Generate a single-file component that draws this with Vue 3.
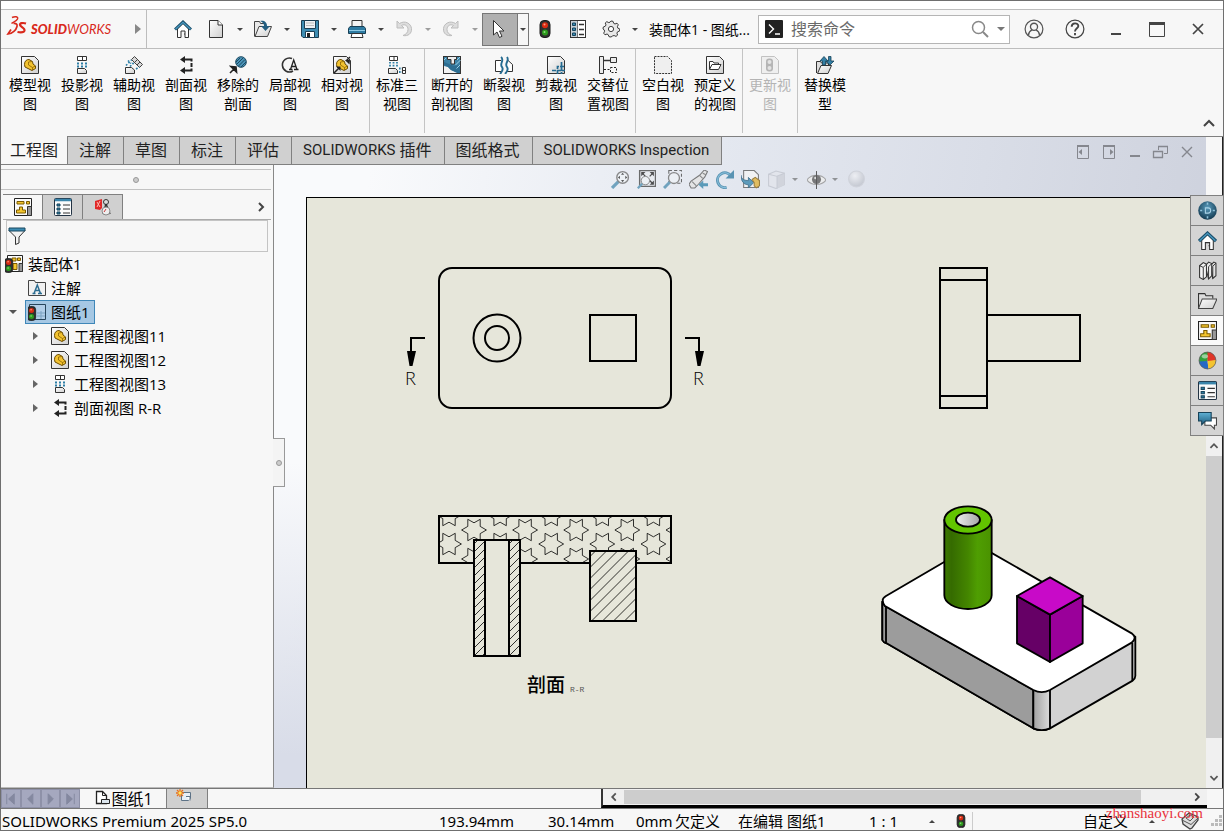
<script setup>
import { h } from 'vue'

const Icon = (p) =>
  h('svg', { width: p.size || 18, height: p.size || 18, viewBox: '0 0 18 18', 'aria-hidden': 'true' }, [
    h('use', { href: '#' + p.name }),
  ])
Icon.props = ['name', 'size']

const fileTools = [
  { icon: 'doc', label: '新建' },
  { icon: 'open', label: '打开' },
  { icon: 'save', label: '保存' },
  { icon: 'print', label: '打印' },
  { icon: 'undo', label: '撤消', off: true },
  { icon: 'redo', label: '重做', off: true },
]

const ribbon = [
  [
    { icon: 'model', a: '模型视', b: '图' },
    { icon: 'proj', a: '投影视', b: '图' },
    { icon: 'aux', a: '辅助视', b: '图' },
    { icon: 'section', a: '剖面视', b: '图' },
    { icon: 'removed', a: '移除的', b: '剖面' },
    { icon: 'detail', a: '局部视', b: '图' },
    { icon: 'relative', a: '相对视', b: '图' },
  ],
  [{ icon: 'std3', a: '标准三', b: '视图' }],
  [
    { icon: 'broken', a: '断开的', b: '剖视图' },
    { icon: 'break', a: '断裂视', b: '图' },
    { icon: 'crop', a: '剪裁视', b: '图' },
    { icon: 'alt', a: '交替位', b: '置视图' },
  ],
  [
    { icon: 'empty', a: '空白视', b: '图' },
    { icon: 'predef', a: '预定义', b: '的视图' },
  ],
  [{ icon: 'update', a: '更新视', b: '图', off: true }],
  [{ icon: 'replace', a: '替换模', b: '型' }],
]

const tabs = [
  { zh: '工程图' },
  { zh: '注解' },
  { zh: '草图' },
  { zh: '标注' },
  { zh: '评估' },
  { en: 'SOLIDWORKS', zh: '插件' },
  { zh: '图纸格式' },
  { en: 'SOLIDWORKS Inspection' },
]
const sideTabs = ['sheet', 'list', 'dim']
const tree = [
  { level: 0, icon: 'root', text: '装配体1' },
  { level: 1, icon: 'note', text: '注解' },
  { level: 1, icon: 'page', text: '图纸1', open: true, selected: true },
  { level: 2, icon: 'model', text: '工程图视图11', closed: true },
  { level: 2, icon: 'model', text: '工程图视图12', closed: true },
  { level: 2, icon: 'proj', text: '工程图视图13', closed: true },
  { level: 2, icon: 'section', text: '剖面视图 R-R', closed: true },
]
const viewTools = [
  { icon: 'zoomfit' }, { icon: 'zoomarea' }, { icon: 'zoomsel' }, { icon: 'prevview' }, { icon: 'rotate' },
  { icon: 'view3d' }, { icon: 'cube', drop: true }, { icon: 'eye', drop: true }, { icon: 'sphere' },
]
const mdi = ['paneL', 'paneR', 'mdimin', 'mdirest', 'mdiclose']
const taskTabs = ['globe', 'home', 'books', 'folder', 'sheet', 'ball', 'list', 'chat']

const starPath = (cx, cy) => {
  const pts = []
  for (let i = 0; i < 12; i++) {
    const r = i % 2 ? 7.2 : 12.4
    const t = (i * Math.PI) / 6
    pts.push(`${(cx + r * Math.cos(t)).toFixed(1)} ${(cy + r * Math.sin(t)).toFixed(1)}`)
  }
  return 'M' + pts.join('L') + 'Z'
}
let stars = ''
for (let k = 0; k < 5; k++) {
  stars += starPath(449 + k * 51.1, 515) + starPath(449 + k * 51.1, 544)
  stars += starPath(474 + k * 51.1, 530) + starPath(474 + k * 51.1, 559)
}
const hatch = (x1, x2, y1, y2, step) => {
  let d = ''
  const w = x2 - x1
  for (let y = y1 + step / 2; y < y2 + w; y += step) d += `M${x1} ${y}L${x2} ${y - w}`
  return d
}
const hatchLeft = hatch(474, 485, 540, 656, 8)
const hatchRight = hatch(509, 520, 540, 656, 8)
const hatchBlock = hatch(590, 636, 551, 621, 11)
</script>

<template>
  <div class="app">
    <svg class="sprite" aria-hidden="true">
      <defs>
        <linearGradient id="gBlue" x1="0" y1="0" x2="0" y2="1"><stop offset="0" stop-color="#5fb0d4" /><stop offset="1" stop-color="#1d5c7e" /></linearGradient>
        <linearGradient id="gGray" x1="0" y1="0" x2="1" y2="1"><stop offset="0" stop-color="#fff" /><stop offset="1" stop-color="#cfcfcf" /></linearGradient>
        <linearGradient id="gTube" x1="0" y1="0" x2="1" y2="0"><stop offset="0" stop-color="#3d7a00" /><stop offset=".15" stop-color="#356b00" /><stop offset=".5" stop-color="#448600" /><stop offset=".7" stop-color="#4f9e02" /><stop offset="1" stop-color="#4a9200" /></linearGradient>
        <linearGradient id="gHole" x1="0" y1="0" x2="1" y2="0"><stop offset="0" stop-color="#efefef" /><stop offset="1" stop-color="#a5a5a5" /></linearGradient>
        <linearGradient id="gCorner" x1="0" y1="0" x2="1" y2="0"><stop offset="0" stop-color="#a2a2a2" /><stop offset="1" stop-color="#dcdcdc" /></linearGradient>
        <radialGradient id="gGlobe" cx=".5" cy=".35" r=".65"><stop offset="0" stop-color="#5a9cbd" /><stop offset="1" stop-color="#12384f" /></radialGradient>
        <radialGradient id="gPale" cx=".4" cy=".3" r=".7"><stop offset="0" stop-color="#f0f1f5" /><stop offset="1" stop-color="#c0c4cd" /></radialGradient>
        <clipPath id="cPlate"><rect x="439" y="516" width="232" height="47" /></clipPath>
        <clipPath id="cTube"><rect x="474" y="540" width="46" height="116" /></clipPath>
        <clipPath id="cBlock"><rect x="590" y="551" width="46" height="70" /></clipPath>
        <clipPath id="cBall"><circle cx="9" cy="9" r="8" /></clipPath>
      </defs>
      <symbol id="home" viewBox="0 0 18 18"><path d="M3.500 9v8.500H7V11h4v6.500h3.500V9L9 3.500z" fill="#fff" stroke="#333" /><path d="M10 14h1" stroke="#333" /><path d="M1 9.500 9 2l8 7.500" fill="none" stroke="#1b4f6c" stroke-width="3" /><path d="M1.500 9.200 9 2.200l7.500 7" fill="none" stroke="#4a9ac0" stroke-width="1.200" /></symbol>
      <symbol id="doc" viewBox="0 0 18 18"><path d="M2.500.5h8.500L15.500 5v12.500h-13z" fill="url(#gGray)" stroke="#333" /><path d="M11 .5V5h4.500" fill="#fff" stroke="#333" /></symbol>
      <symbol id="open" viewBox="0 0 18 18"><path d="M.5 16.500v-15h5l1 2h4" fill="#e8e8e8" stroke="#444" /><path d="M1 16.500 5 6.500h12.500l-4 10z" fill="url(#gGray)" stroke="#444" /><path d="M6 1c4-1 7 1 7 5h3l-4.500 5L7 6h3c0-2-1-4-4-5z" fill="#235e80" /></symbol>
      <symbol id="save" viewBox="0 0 18 18"><path d="M.5.5h17v17H2l-1.500-1.500z" fill="#3d8db3" stroke="#1b3e52" /><path d="M3.500.5h11v8h-11z" fill="#eef2f4" stroke="#1b3e52" /><path d="M5 3h8M5 5.500h8" stroke="#bbb" /><path d="M4.500 11.500h9v6h-9z" fill="#fff" stroke="#1b3e52" /><path d="M6 13h3v4H6z" fill="#222" /></symbol>
      <symbol id="print" viewBox="0 0 18 18"><path d="M4 7V.5h10V7" fill="#f4f4f4" stroke="#333" /><path d="M2 6.500h14l1.500 2v5H.5v-5z" fill="#2e7ba2" stroke="#173f55" /><path d="M1 10.500h16" stroke="#8fcbe5" /><path d="M4 13.500h10l1 4H3z" fill="#fff" stroke="#333" /></symbol>
      <symbol id="undo" viewBox="0 0 18 18"><path d="M2 1v7h7L6.500 5.500C10 3.500 13 6 13 9.500c0 3-2 5-5 6 5 1 9-2 8.500-7C16 3.500 10 0 4.500 3.500z" fill="#ddd" stroke="#bdbdbd" /></symbol>
      <symbol id="redo" viewBox="0 0 18 18"><path d="M16 1v7H9l2.500-2.500C8 3.500 5 6 5 9.500c0 3 2 5 5 6-5 1-9-2-8.500-7C2 3.500 8 0 13.500 3.500z" fill="#ddd" stroke="#bdbdbd" /></symbol>
      <symbol id="cursor" viewBox="0 0 18 18"><path d="M2.500.5v14.500l3.500-3 2.500 5.500 2.500-1.200-2.500-5.300h4.500z" fill="#fff" stroke="#333" /></symbol>
      <symbol id="light" viewBox="0 0 18 18"><rect x="4" y=".5" width="10" height="17" rx="4" fill="#2f2f2f" stroke="#1d1d1d" /><circle cx="9" cy="5.300" r="3" fill="#d92b12" /><circle cx="8.500" cy="4.500" r="1" fill="#ff9a80" /><circle cx="9" cy="12.500" r="3" fill="#2d9a1d" /><circle cx="8.500" cy="12" r="1" fill="#8fdd7c" /></symbol>
      <symbol id="list" viewBox="0 0 18 18"><rect x=".5" y=".5" width="17" height="17" rx="1" fill="#fbfbfb" stroke="#234" /><path d="M1 2h16" stroke="#3a85ab" stroke-width="2.500" /><path d="M3 6h3v2H3zM3 10h3v2H3zM3 14h3v2H3z" fill="#2f7ca2" stroke="#17445c" /><path d="M9 7h7M9 11h7M9 15h7" stroke="#333" /></symbol>
      <symbol id="options" viewBox="0 0 18 18"><rect x="1.500" y=".5" width="15" height="17" fill="#fff" stroke="#333" /><path d="M2 1h6v16H2z" fill="#c9d2d8" /><path d="M8.500 1v16" stroke="#777" /><path d="M3.500 3h3v2.500h-3zM3.500 8h3v2.500h-3zM3.500 13h3v2.500h-3z" fill="#3a8cb4" stroke="#17445c" /><path d="M10 4.500h5M10 9.500h5M10 14.500h5" stroke="#333" stroke-width="1.300" /></symbol>
      <symbol id="gear" viewBox="0 0 18 18"><path d="M9 1l2 .3.700 2 1.300.7 2-.8 1.300 1.600-.9 1.900.4 1.400 2 .9-.2 2-2 .8-.7 1.300.7 2-1.600 1.300-1.900-.9-1.400.4L9 17l-2-.3-.8-2-1.200-.7-2 .8-1.300-1.600.9-2-.4-1.300L1 9l.3-2 2-.8.7-1.300-.8-1.900L4.800 1.700l2 .9 1.200-.4z" fill="#e8e8e8" stroke="#3a3a3a" /><circle cx="9" cy="9" r="2.600" fill="#fff" stroke="#3a3a3a" /></symbol>
      <symbol id="prompt" viewBox="0 0 18 18"><rect width="18" height="18" rx="1" fill="#222" /><path d="M4 4.500 8.500 9 4 13.500M10 14h5" fill="none" stroke="#fff" stroke-width="1.400" /></symbol>
      <symbol id="search" viewBox="0 0 18 18"><circle cx="7.500" cy="7.500" r="6" fill="none" stroke="#888" stroke-width="1.500" /><path d="M12 12l5 5" stroke="#888" stroke-width="2" /></symbol>
      <symbol id="user" viewBox="0 0 18 18"><circle cx="9" cy="9" r="8" fill="none" stroke="#555" stroke-width="1.100" /><circle cx="9" cy="7" r="3.200" fill="none" stroke="#555" stroke-width="1.200" /><path d="M4 14.500c.3-2.500 1.500-4 3.200-4.700M14 14.500c-.3-2.500-1.500-4-3.200-4.700" fill="none" stroke="#555" stroke-width="1.200" /></symbol>
      <symbol id="help" viewBox="0 0 18 18"><circle cx="9" cy="9" r="8" fill="none" stroke="#444" stroke-width="1.100" /><path d="M6 7c0-4 6-4 6-.7 0 2-3 2.200-3 5M9 12.700v2" fill="none" stroke="#444" stroke-width="1.700" /></symbol>
      <symbol id="wmin" viewBox="0 0 18 18"><path d="M4 14h10" stroke="#444" stroke-width="2" /></symbol>
      <symbol id="wmax" viewBox="0 0 18 18"><path d="M1.500 2v14.500h15V2" fill="none" stroke="#444" /><path d="M1 3.500h16" stroke="#444" stroke-width="3" /></symbol>
      <symbol id="wclose" viewBox="0 0 18 18"><path d="M4 4l10 10M14 4 4 14" stroke="#444" stroke-width="1.700" /></symbol>
      <symbol id="part" viewBox="0 0 18 18"><path d="M3.500 8.500C3.500 5 5.500 3.500 8 3.500l3.500 2L12 8l2.500 2v2.500L11 14.500 4 11z" fill="#f2c230" stroke="#6b4c00" /><path d="M7.500 6v3l4 2.500M11.500 14v-2.500l3-1.500M7.500 6 11 5.500" fill="none" stroke="#8a6300" stroke-width=".8" /></symbol>
      <symbol id="model" viewBox="0 0 18 18"><path d="M.5.5h13l4 4v13H.5z" fill="url(#gGray)" stroke="#333" /><use href="#part" width="18" height="18" /></symbol>
      <symbol id="proj" viewBox="0 0 18 18"><path d="M4.500.5h9v4h-9zM9.500.5v4" fill="#fff" stroke="#333" /><path d="M5 6.500v5M9 6.500v5M13 6.500v5" stroke="#2e7fa6" stroke-width="2" stroke-dasharray="2 1" /><path d="M4.500 12.500h7l2 2v3h-9z" fill="url(#gGray)" stroke="#333" /></symbol>
      <symbol id="aux" viewBox="0 0 18 18"><path d="M6.500 3.500l3-3 8 8-3 3zM9.500 6.500l3-3M12 9l3-3" fill="#d8d8d8" stroke="#444" /><path d="M1 9.500 6.500 4M5 10.500l4-4M11 13l3.500-2M3 4.500l3 3" stroke="#2e7fa6" stroke-width="1.700" stroke-dasharray="1.800 1.600" /><path d="M.5 11.500h6l3 2.500v3.500h-9z" fill="url(#gGray)" stroke="#333" /></symbol>
      <symbol id="section" viewBox="0 0 18 18"><path d="M7 3.500h7.500v2M14.500 7v4M14.500 12.500v2H7" fill="none" stroke="#222" stroke-width="2" /><path d="M8 0v7L3 3.500zM8 11v7l-5-3.500z" fill="#222" /></symbol>
      <symbol id="removed" viewBox="0 0 18 18"><circle cx="12" cy="6" r="5.300" fill="#4a94b9" stroke="#1b4860" /><path d="M8 8l6-6M9.500 10 16 3.500M12 11l5-5M7 6l4-4" stroke="#1b4860" /><path d="M1 17l4-4M2 10.500l5 .5.500 5z" stroke="#222" stroke-width="1.600" fill="#222" /></symbol>
      <symbol id="detail" viewBox="0 0 18 18"><path d="M11 2.500A7 7 0 1 0 12 15" fill="none" stroke="#333" stroke-width="1.600" /><path d="M8 13.500h3.500M13 13.500h4.500M9.500 13.500l3.200-9.500 3.300 9.500M11 10.500h4" fill="none" stroke="#222" stroke-width="1.300" /></symbol>
      <symbol id="relative" viewBox="0 0 18 18"><use href="#model" width="18" height="18" /><path d="M1 17l5-5M17 1l-4 4" stroke="#222" stroke-width="1.500" /><path d="M12 4l4.500 4.500L17 4zM3 10.500h4.500V15z" fill="#222" /></symbol>
      <symbol id="std3" viewBox="0 0 18 18"><path d="M1.500.5h8v4h-8zM6 .5v4" fill="#fff" stroke="#333" /><path d="M2 6v5M5.500 6v5M9 6v5M11 12.500h3M11 16h3" stroke="#2e7fa6" stroke-width="1.800" stroke-dasharray="1.600 1.200" /><path d="M.5 12.500h7l2 2v3h-9z" fill="url(#gGray)" stroke="#333" /><path d="M14.500 11.500h3v6h-3zM14.500 14.500h3" fill="#fff" stroke="#333" /></symbol>
      <symbol id="broken" viewBox="0 0 18 18"><rect x=".5" y=".5" width="17" height="17" fill="#3c82a6" stroke="#333" /><path d="M1 10l4 1 3 3 8 3H1z" fill="#f2f2f2" /><path d="M1 6v3l4 2 3 3 6 3h3V9l-6 1z" fill="#2d6e92" /><path d="M4.500.5h9v3h-2V8H8V3.500H4.500z" fill="#eee" stroke="#333" /><path d="M12.500 9l5-5M13.500 12.500 17 9M14 4l3-3M1 4l2-2" stroke="#9bd0e6" /></symbol>
      <symbol id="break" viewBox="0 0 18 18"><path d="M6 4.500H.5v11H6M12 3.500l5.500 5v7H12" fill="#fff" stroke="#333" /><path d="M6 1c4 3-2 7 1 10 2 3 0 5-2 7M12 1c3 4-3 6 0 10 2 3 0 5-2 7" fill="none" stroke="#256b91" stroke-width="1.900" /></symbol>
      <symbol id="crop" viewBox="0 0 18 18"><path d="M.5.5h13l4 4v13H.5z" fill="url(#gGray)" stroke="#333" /><path d="M5 14.500h13M14.500 6v12M10.500 18v-7.500H18" fill="none" stroke="#256b91" stroke-width="1.700" stroke-dasharray="4 1" /></symbol>
      <symbol id="alt" viewBox="0 0 18 18"><path d="M.5.5h4v17h-4zM11.500 1.500h6v5h-6z" fill="#ececec" stroke="#333" /><path d="M5 4.500h6" stroke="#333" stroke-width="1.500" /><path d="M5 13.500h6M11.500 11.500h6v5h-6z" fill="none" stroke="#222" stroke-dasharray="2 1.500" /></symbol>
      <symbol id="empty" viewBox="0 0 18 18"><path d="M.5.5h13l4 4v13H.5z" fill="#efefef" stroke="#333" stroke-dasharray="2 1" /></symbol>
      <symbol id="predef" viewBox="0 0 18 18"><path d="M.5.5h13l4 4v13H.5z" fill="url(#gGray)" stroke="#333" /><path d="M3.500 13V5.500h3.500l1 1.500h4.500v1.500M3.500 13.500l2.500-5h9l-2.500 5z" fill="#fff" stroke="#333" /></symbol>
      <symbol id="update" viewBox="0 0 18 18"><path d="M.5.5h13l4 4v13H.5z" fill="#efefef" stroke="#c2c2c2" /><rect x="5" y="2.500" width="7" height="13" rx="3" fill="#b5b5b5" /><circle cx="8.500" cy="6" r="2" fill="#e3e3e3" /><circle cx="8.500" cy="12" r="2" fill="#e3e3e3" /></symbol>
      <symbol id="replace" viewBox="0 0 18 18"><path d="M.5 17V5.500h4l1 1.500h7v3" fill="#ddd" stroke="#333" /><path d="M1.500 17.500l3.500-8h10.500l-3.500 8z" fill="url(#gGray)" stroke="#333" /><path d="M6.500 9V5H4l4-4.500L12 5H9.500v4zM12.500.5h2.500V5H18l-4 4-4-3.500 2.500-.5z" fill="#3480a6" stroke="#174259" stroke-width=".8" /></symbol>
      <symbol id="sheet" viewBox="0 0 18 18"><path d="M.5.5h17v17H.5z" fill="#fafafa" stroke="#222" /><path d="M3 3.500h7v2.500H3zM12.500 3.500h3V6h-3zM5.500 9h3v3h3v3H2.500v-3h3z" fill="#f4c62e" stroke="#7a5a00" /><path d="M13.500 8.500h4v9h-4z" fill="#999" stroke="#333" /></symbol>
      <symbol id="dim" viewBox="0 0 18 18"><path d="M1 3l7-2v9l-2 2-5-1z" fill="#e02828" /><path d="M3 4l3 5M6 3 3 9" stroke="#ffb9b0" /><circle cx="12" cy="4" r="2.500" fill="#ddd" stroke="#333" /><path d="M12 6l-3 10M12 6l4 10" stroke="#333" stroke-width="1.500" /><circle cx="12" cy="13" r="4" fill="#eee" stroke="#888" /><path d="M12 11l-2 3" stroke="#c33" /></symbol>
      <symbol id="funnel" viewBox="0 0 18 18"><path d="M1 3.500h16l-6 6.500v6l-3.500 1.500V10z" fill="#f2f2f2" stroke="#333" /><path d="M1 1h16v3H1z" fill="#3c8cb3" stroke="#1b4860" /></symbol>
      <symbol id="root" viewBox="0 0 18 18"><path d="M2.500.5h15v16h-15z" fill="#fafafa" stroke="#222" /><path d="M7 3h4v3H7zM12.500 3h3v2.500h-3zM8 8.500h4v6H8z" fill="#f4c62e" stroke="#7a5a00" /><path d="M14 8.500h3.500v8H14z" fill="#999" stroke="#333" /><use href="#light" x="-4" y="3" width="15" height="15" /></symbol>
      <symbol id="note" viewBox="0 0 18 18"><path d="M.5 16.500v-15h6l1 2h10v13z" fill="#f1f1f1" stroke="#444" /><path d="M4.500 14.500h3M10 14.500h4M6 14.500 9.300 6l3.200 8.500M7 11.500h4.500" fill="none" stroke="#2c6d91" stroke-width="1.500" /></symbol>
      <symbol id="page" viewBox="0 0 18 18"><path d="M1.500 1.500h16v15h-16z" fill="#b2cee8" stroke="#27455c" /><path d="M9 10h8M9 13h8M13 8v8" stroke="#7ca3c2" /><use href="#light" x="-4" y="3" width="15" height="15" /></symbol>
      <symbol id="lens" viewBox="0 0 18 18"><path d="M1 17l6-6" stroke="#5d97b6" stroke-width="3" /><circle cx="11" cy="7" r="5.500" fill="#eef2f6" stroke="#777" stroke-width="1.300" /></symbol>
      <symbol id="zoomfit" viewBox="0 0 18 18"><use href="#lens" width="18" height="18" /><path d="M11 2.500l1.500 2h-3zM11 11.500l1.500-2h-3zM6.500 7l2-1.500v3zM15.500 7l-2-1.500v3z" fill="#444" /></symbol>
      <symbol id="zoomarea" viewBox="0 0 18 18"><path d="M2.500.5h15v15h-15z" fill="#e8ebf0" stroke="#555" stroke-width="1.300" /><path d="M4 2h4L4 6zM16 2v4l-4-4zM16 14h-4l4-4z" fill="#333" /><path d="M5 3l3 3M15 3l-3 3M15 13l-3-3" stroke="#333" stroke-width="1.200" /><use href="#lens" x="0" y="5" width="13" height="13" /></symbol>
      <symbol id="zoomsel" viewBox="0 0 18 18"><path d="M5.500.5h12v12h-12z" fill="none" stroke="#555" stroke-dasharray="3 2" /><use href="#lens" x="0" y="1" width="17" height="17" /></symbol>
      <symbol id="prevview" viewBox="0 0 18 18"><path d="M14.500 0l3 1.500-2.500 5-6 7-3.500 3.500H2l-2-3.500 2-3L10 5z" fill="#e4e4e4" stroke="#666" /><path d="M3 11l4 4M10 5l3 3M13 3l3 1.500" stroke="#777" /><path d="M13.500 10v2.500H18v3h-4.500V18L9 14z" fill="#438db0" /></symbol>
      <symbol id="rotate" viewBox="0 0 18 18"><path d="M15 5.500A7 7 0 1 0 11 16.500" fill="none" stroke="#4285a8" stroke-width="2.800" /><path d="M15 5.500A7 7 0 1 0 11 16.500" fill="none" stroke="#78b8d8" stroke-width="1" /><path d="M18 0v8h-8z" fill="#4285a8" /></symbol>
      <symbol id="view3d" viewBox="0 0 18 18"><path d="M2.500.5h10l4 4v12h-14z" fill="#f4f4f4" stroke="#666" /><path d="M0 5c0 4 4 5 7 5V7l5 5-5 5v-3C3 14 0 11 0 5z" fill="#468eb2" stroke="#265d7b" stroke-width=".8" /><path d="M10.500 9l3-2 4 3v5l-3 2-2-2v-3z" fill="#e0b548" stroke="#8d6b20" /></symbol>
      <symbol id="cube" viewBox="0 0 18 18"><path d="M1.500 4l7-3 8 2v11l-8 3.500-7-2.500z" fill="#e3e5ec" stroke="#c3c7d0" /><path d="M9.500 6l7-3v11l-7 3.500z" fill="#cfd2da" /><path d="M1.500 4l8 2v11.500M9.500 6l7-3" fill="none" stroke="#c3c7d0" /></symbol>
      <symbol id="eye" viewBox="0 0 18 18"><path d="M0 9.500C4 3.500 14 3.500 18 9.500c-4 5.500-14 5.500-18 0z" fill="#eee" stroke="#9a9a9a" /><circle cx="9" cy="9" r="4.300" fill="#666" /><circle cx="8" cy="7.500" r="1.200" fill="#ddd" /><path d="M9 1v17" stroke="#444" /></symbol>
      <symbol id="sphere" viewBox="0 0 18 18"><circle cx="9" cy="8.500" r="7.500" fill="url(#gPale)" stroke="#cdd0d8" /></symbol>
      <symbol id="paneL" viewBox="0 0 18 18"><path d="M3.500 2.500h11v13h-11z" fill="none" stroke="#85878e" /><path d="M3 3h12" stroke="#85878e" stroke-width="2" /><path d="M8 6v6L4.500 9z" fill="#85878e" /></symbol>
      <symbol id="paneR" viewBox="0 0 18 18"><path d="M3.500 2.500h11v13h-11z" fill="none" stroke="#85878e" /><path d="M3 3h12" stroke="#85878e" stroke-width="2" /><path d="M10 6v6l3.500-3z" fill="#85878e" /></symbol>
      <symbol id="mdimin" viewBox="0 0 18 18"><path d="M4 13h10" stroke="#85878e" stroke-width="2" /></symbol>
      <symbol id="mdirest" viewBox="0 0 18 18"><path d="M6.500 7V3.500h9v7H12" fill="none" stroke="#85878e" /><path d="M1.500 8.500h9v6h-9zM6 3.500h10M1 8.500h10" fill="none" stroke="#85878e" stroke-width="1.300" /></symbol>
      <symbol id="mdiclose" viewBox="0 0 18 18"><path d="M4 4l10 10M14 4 4 14" stroke="#85878e" stroke-width="1.400" /></symbol>
      <symbol id="globe" viewBox="0 0 18 18"><circle cx="9" cy="9" r="8.800" fill="url(#gGlobe)" /><path d="M7 6.500h2.500a2.500 2.500 0 0 1 0 5H7z" fill="none" stroke="#a9d2e6" /><path d="M9 1.500v2M9 14.500v2M2 9h2M14 9h2" stroke="#8fc3dc" stroke-width="1.500" /></symbol>
      <symbol id="books" viewBox="0 0 18 18"><path d="M12 4l3-3 2 1v12l-3 2.500z" fill="#e2e2e2" stroke="#333" /><path d="M7 4.500 10 1l3 1.500V14l-3 3z" fill="#ececec" stroke="#333" /><path d="M1.500 4.500 5 1.500l3 1.500v12l-3 2.500-3.500-2z" fill="#f4f4f4" stroke="#333" /><path d="M1.500 4.500 5 6v11.500M5 6l3-3M10 5.500V17M10 5.500l3-3M14 5v11.500M14 5l3-3" fill="none" stroke="#333" stroke-width=".9" /></symbol>
      <symbol id="folder" viewBox="0 0 18 18"><path d="M.5 16.500v-14h6l1 2H14V7" fill="#ddd" stroke="#333" /><path d="M.5 16.500 4 7.500h14l-4 9z" fill="url(#gGray)" stroke="#444" /></symbol>
      <symbol id="ball" viewBox="0 0 18 18"><g clip-path="url(#cBall)"><path d="M0 0h10L9 10 0 11z" fill="#32a13b" /><path d="M9 0h9v9l-9 1z" fill="#e03528" /><path d="M0 10l9-.5L10 18H0z" fill="#2668c4" /><path d="M9 9.500l9-1V18h-8z" fill="#f4c430" /><ellipse cx="6.500" cy="5" rx="3" ry="2" fill="#fff" opacity=".5" /></g><circle cx="9" cy="9" r="8" fill="none" stroke="#555" stroke-width=".7" /></symbol>
      <symbol id="chat" viewBox="0 0 18 18"><path d="M6.500 6.500h11v7h-2v3.500L12 13.500H6.500z" fill="#fff" stroke="#444" /><path d="M.5 1.500h12v8H7L3.500 13V9.500h-3z" fill="url(#gBlue)" stroke="#174259" /></symbol>
      <symbol id="left" viewBox="0 0 18 18"><path d="M11 5 7 9l4 4" fill="none" stroke="#555" stroke-width="2" /></symbol>
      <symbol id="right" viewBox="0 0 18 18"><path d="M7 5l4 4-4 4" fill="none" stroke="#444" stroke-width="2" /></symbol>
      <symbol id="up" viewBox="0 0 18 18"><path d="M5 11l4-4 4 4" fill="none" stroke="#555" stroke-width="2" /></symbol>
      <symbol id="down" viewBox="0 0 18 18"><path d="M5 7l4 4 4-4" fill="none" stroke="#555" stroke-width="2" /></symbol>
      <symbol id="bigup" viewBox="0 0 18 18"><path d="M4 12l5-5 5 5" fill="none" stroke="#444" stroke-width="2" /></symbol>
      <symbol id="first" viewBox="0 0 18 18"><path d="M5 4v11M13 4v11L7 9.500z" fill="#84889f" stroke="#84889f" /></symbol>
      <symbol id="prev" viewBox="0 0 18 18"><path d="M11.500 4v11L6 9.500z" fill="#84889f" stroke="#84889f" /></symbol>
      <symbol id="next" viewBox="0 0 18 18"><path d="M6.500 4v11L12 9.500z" fill="#84889f" stroke="#84889f" /></symbol>
      <symbol id="last" viewBox="0 0 18 18"><path d="M13 4v11M5 4v11l6-5.500z" fill="#84889f" stroke="#84889f" /></symbol>
      <symbol id="newpage" viewBox="0 0 18 18"><path d="M3.500 1.500h6l4 4v8h-10z" fill="#fff" stroke="#222" stroke-width="1.300" /><path d="M9.500 1.500v4h4" fill="none" stroke="#222" /><path d="M8.500 9.500h8v4h-8z" fill="#dce6ee" stroke="#222" /></symbol>
      <symbol id="addsheet" viewBox="0 0 18 18"><path d="M6.500 3.500h9v6l-2 2h-7z" fill="#e6eef6" stroke="#5d7286" /><path d="M11 7.500h4v4" fill="#fff" stroke="#5d7286" /><path d="M5 0v8M1 4h8M2 1l6 6M8 1 2 7" stroke="#e8711e" stroke-width="1.300" /><circle cx="5" cy="4" r="1.700" fill="#ffe45c" /></symbol>
      <symbol id="tag" viewBox="0 0 18 18"><path d="M1 7 8 1l9 4v3l-6 8-2 1-7-5z" fill="#dedede" stroke="#444" stroke-width="1.300" /><path d="M1 8l9 4.500L17 6M5 6l4-3 4 2-4 4z" fill="none" stroke="#555" /></symbol>
    </svg>

    <header class="titlebar">
      <div class="brand">
        <svg width="24" height="22" viewBox="0 0 24 22" aria-hidden="true">
          <path d="M6 2.500C9 1 12.500 1.500 11.500 4 10.500 6 7.500 7 5.500 8.500" fill="none" stroke="#d9291c" stroke-width="1.500" />
          <path d="M7.500 8.500c3-.3 4 1 3.500 3-.8 3.500-4.500 7-9 7.500l3-4.500" fill="none" stroke="#d9291c" stroke-width="1.700" />
          <path d="M20 8.500c-3-1-6.500-.5-6 1.500.4 1.800 5 3 4.500 5.500-.5 2-4 2-7 1.500" fill="none" stroke="#d9291c" stroke-width="2.200" />
        </svg>
        <span class="wordmark"><b>SOLID</b>WORKS</span>
        <button class="expand" aria-label="展开菜单"><i class="tri-right"></i></button>
      </div>
      <div class="quick">
        <button class="qhome" aria-label="主页"><Icon name="home" /></button>
        <template v-for="t in fileTools" :key="t.icon">
          <button class="qbtn" :aria-label="t.label" :disabled="t.off"><Icon :name="t.icon" /></button>
          <button class="qdrop" :class="{ off: t.off }" :aria-label="t.label + '选项'"><i class="tri-down"></i></button>
        </template>
        <button class="select" aria-label="选择"><Icon name="cursor" /></button>
        <button class="selectdrop" aria-label="选择选项"><i class="tri-down"></i></button>
        <button class="qtool" aria-label="重建模型"><Icon name="light" /></button>
        <button class="qtool" aria-label="文件属性"><Icon name="options" /></button>
        <button class="qtool" aria-label="选项"><Icon name="gear" /></button>
        <button class="qend" aria-label="更多选项"><i class="tri-down"></i></button>
      </div>
      <h1 class="doctitle">装配体1 - 图纸...</h1>
      <label class="search">
        <Icon name="prompt" />
        <input type="text" placeholder="搜索命令" aria-label="搜索命令" />
        <Icon name="search" />
        <i class="tri-down"></i>
      </label>
      <div class="window">
        <button aria-label="帐户"><Icon name="user" size="20" /></button>
        <button aria-label="帮助"><Icon name="help" size="20" /></button>
        <button aria-label="最小化"><Icon name="wmin" /></button>
        <button aria-label="最大化"><Icon name="wmax" /></button>
        <button aria-label="关闭"><Icon name="wclose" /></button>
      </div>
    </header>

    <section class="ribbon">
      <div v-for="(g, i) in ribbon" :key="i" class="group">
        <button v-for="c in g" :key="c.icon" class="cmd" :disabled="c.off">
          <Icon :name="c.icon" />
          <span>{{ c.a }}<br />{{ c.b }}</span>
        </button>
      </div>
      <button class="collapse" aria-label="折叠"><Icon name="bigup" /></button>
    </section>

    <main class="stage">
      <div class="tabrow">
        <nav class="tabs">
          <button v-for="(t, i) in tabs" :key="i" :class="{ active: i === 0 }">
            <span v-if="t.en" class="latin">{{ t.en }}</span>
            <span v-if="t.zh">{{ t.zh }}</span>
          </button>
        </nav>
        <div class="mdi">
          <button v-for="m in mdi" :key="m" :aria-label="m"><Icon :name="m" /></button>
        </div>
      </div>

      <div class="body">
        <aside class="panel">
          <div class="grip"><i class="dot"></i></div>
          <div class="sidetabs">
            <button v-for="(s, i) in sideTabs" :key="s" :class="{ active: i === 0 }" :aria-label="s"><Icon :name="s" /></button>
            <button class="more" aria-label="更多"><Icon name="right" /></button>
          </div>
          <label class="filter"><Icon name="funnel" /><input type="text" aria-label="过滤" /></label>
          <ul class="tree">
            <li v-for="n in tree" :key="n.text" :class="'lv' + n.level">
              <span class="twist"><i v-if="n.open" class="tri-down"></i><i v-if="n.closed" class="tri-right"></i></span>
              <button class="node" :class="{ selected: n.selected }"><Icon :name="n.icon" /><span>{{ n.text }}</span></button>
            </li>
          </ul>
          <button class="splitter" aria-label="折叠面板"><i class="dot"></i></button>
        </aside>

        <section class="viewport">
          <div class="viewbar">
            <template v-for="v in viewTools" :key="v.icon">
              <button :aria-label="v.icon"><Icon :name="v.icon" size="19" /></button>
              <i v-if="v.drop" class="tri-down"></i>
            </template>
          </div>
          <div class="sheet">
            <svg viewBox="307 198 899 590" preserveAspectRatio="xMinYMin meet" class="drawing">
              <g fill="none" stroke="#000" stroke-width="2">
                <rect x="439" y="268" width="232" height="140" rx="13" />
                <circle cx="497" cy="338" r="23.500" />
                <circle cx="497" cy="338" r="12" />
                <rect x="590" y="315" width="46" height="46" />
                <path d="M425 338H411V354M685 338H699V354" />
                <rect x="940" y="268" width="47" height="140" />
                <path d="M940 280H987M940 396H987" />
                <rect x="987" y="315" width="93" height="46" />
              </g>
              <path d="M407 351H416L412.500 366H409.500ZM695 351H704L700.500 366H697.500Z" />
              <text x="405" y="385" class="mark">R</text>
              <text x="693" y="385" class="mark">R</text>

              <path :d="stars" class="thin" clip-path="url(#cPlate)" />
              <g fill="none" stroke="#000" stroke-width="2">
                <rect x="439" y="516" width="232" height="47" />
                <rect x="474" y="540" width="46" height="116" fill="#e6e6da" />
                <rect x="590" y="551" width="46" height="70" fill="#e6e6da" />
                <path d="M485 540V656M509 540V656" />
              </g>
              <path :d="hatchLeft + hatchRight" class="thin" clip-path="url(#cTube)" />
              <path :d="hatchBlock" class="thin" clip-path="url(#cBlock)" />
              <text x="527" y="692" class="caption">剖面</text>
              <text x="570" y="692" class="small">R-R</text>

              <g transform="translate(870 490) scale(.33333)" stroke="#000" stroke-width="5.500" stroke-linejoin="round">
                <path d="M37 335V450Q40 457 50 460L490 715Q515 726 540 715L788 572Q796 565 796 558V440Z" fill="#d2d2d2" />
                <path d="M37 335V450Q40 457 50 460L490 715V600L45 348Z" fill="#9c9c9c" />
                <path d="M490 600V715Q515 726 540 715V600Z" fill="url(#gCorner)" />
                <path d="M38 330Q38 325 48 318L270 188Q294 168 320 163L785 430Q803 443 785 458L540 600Q515 613 490 600L45 348Q38 340 38 330Z" fill="#fff" />
                <path d="M48 350V460M787 458V572" />
                <path d="M223 90V316A71 41 0 0 0 365 316V90Z" fill="url(#gTube)" />
                <ellipse cx="294" cy="90" rx="71" ry="41" fill="#62c400" />
                <ellipse cx="294" cy="89" rx="36" ry="21" fill="url(#gHole)" />
                <path d="M441 318L540 374V516L441 460Z" fill="#660066" />
                <path d="M540 374L638 318V460L540 516Z" fill="#9a009a" />
                <path d="M540 262L638 318L540 374L441 318Z" fill="#c80ac8" />
              </g>
            </svg>
          </div>
        </section>

        <div class="vside">
          <nav class="taskpane">
            <button v-for="t in taskTabs" :key="t" :class="{ active: t === 'sheet' }" :aria-label="t"><Icon :name="t" size="19" /></button>
          </nav>
          <div class="vscroll">
            <button aria-label="向上"><Icon name="up" size="16" /></button>
            <div class="vthumb"></div>
            <button aria-label="向下"><Icon name="down" size="16" /></button>
          </div>
        </div>
      </div>
    </main>

    <div class="sheetbar">
      <div class="pager">
        <button v-for="p in ['first', 'prev', 'next', 'last']" :key="p" :aria-label="p"><Icon :name="p" size="17" /></button>
      </div>
      <button class="sheettab"><Icon name="newpage" /><span>图纸1</span></button>
      <button class="addtab" aria-label="添加图纸"><Icon name="addsheet" /></button>
      <div class="hscroll">
        <button aria-label="向左"><Icon name="left" size="16" /></button>
        <div class="htrack"><div class="hthumb"></div></div>
        <button aria-label="向右"><Icon name="right" size="16" /></button>
      </div>
    </div>

    <footer class="status">
      <span class="product">SOLIDWORKS Premium 2025 SP5.0</span>
      <span class="posx">193.94mm</span>
      <span class="posy">30.14mm</span>
      <span class="posz">0mm</span>
      <span class="state">欠定义</span>
      <span class="editing">在编辑 图纸1</span>
      <span class="scale">1 : 1</span>
      <i class="tri-up"></i>
      <span class="lamp"><Icon name="light" size="14" /></span>
      <div class="right">
        <span>自定义</span>
        <i class="tri-up"></i>
        <Icon name="tag" />
        <svg width="12" height="12" viewBox="0 0 12 12" aria-hidden="true"><path d="M8 0h3v3H8zM4 4h3v3H4zM8 4h3v3H8zM0 8h3v3H0zM4 8h3v3H4zM8 8h3v3H8z" fill="#bbb" /></svg>
        <span class="site">zhanshaoyi.com</span>
      </div>
    </footer>
  </div>
</template>

<style>
body { margin: 0; }
</style>

<style scoped>
.app {
  min-height: 100vh;
  box-sizing: border-box;
  display: flex;
  flex-direction: column;
  border: 1px solid #6f6f6f;
  background: #f7f7f7;
  color: #000;
  font-family: "Open Sans", "Noto Sans CJK SC", sans-serif;
  font-size: 14px;
}
.sprite { position: absolute; width: 0; height: 0; }
button {
  display: flex;
  align-items: center;
  justify-content: center;
  margin: 0;
  padding: 0;
  border: 0;
  background: none;
  color: inherit;
  font: inherit;
  flex: none;
}
svg { display: block; flex: none; }
input { border: 0; outline: 0; background: none; padding: 0; min-width: 0; font: inherit; }
.tri-down, .tri-up { flex: none; width: 0; height: 0; border: 3px solid transparent; border-top-color: #444; border-bottom: 0; }
.tri-up { border: 3px solid transparent; border-bottom-color: #444; border-top: 0; }
.tri-right { flex: none; width: 0; height: 0; border: 4px solid transparent; border-left: 5px solid #666; border-right: 0; }
.dot { width: 4px; height: 4px; border: 1px solid #999; border-radius: 50%; background: #ccc; }

.titlebar { display: flex; align-items: stretch; height: 38px; margin-top: 8px; border-top: 1px solid #bdbdbd; border-bottom: 1px solid #bdbdbd; box-shadow: 0 -8px 0 #fff; }
.brand { display: flex; align-items: center; width: 146px; border-right: 1px solid #bdbdbd; padding-left: 5px; box-sizing: border-box; flex: none; }
.brand svg { margin-bottom: 6px; }
.wordmark { color: #d9291c; font-style: italic; font-size: 13px; line-height: 20px; margin-left: 1px; flex: 1; font-family: Lato, sans-serif; }
.wordmark b { font-weight: 900; }
.expand { width: 17px; }
.expand .tri-right { border-width: 5px 0 5px 6px; border-left-color: #888; }
.quick { display: flex; align-items: center; padding-left: 18px; flex: none; }
.qhome { width: 35px; }
.qbtn { width: 32px; }
.qdrop { width: 15px; height: 30px; }
.qdrop.off { opacity: .5; }
.select { width: 36px; height: 33px; background: #b0b0b0; border: 1px solid #777; box-sizing: border-box; }
.selectdrop { width: 11px; height: 33px; border: 1px solid #777; border-left: 0; box-sizing: border-box; }
.qtool { width: 33px; padding-right: 2px; box-sizing: border-box; }
.qend { width: 13px; height: 30px; }
.doctitle { margin: 0 0 0 8px; font-size: 14px; font-weight: 400; line-height: 40px; width: 109px; white-space: nowrap; flex: none; }
.search { display: flex; align-items: center; box-sizing: border-box; width: 252px; height: 29px; align-self: center; border: 1px solid #b5b5b5; background: #fff; padding: 0 4px 0 6px; }
.search input { flex: 1; margin: 0 8px; font-size: 16px; }
.search input::placeholder { color: #6a6a6a; opacity: 1; }
.search .tri-down { margin-left: 8px; border-width: 4px 4px 0; border-top-color: #777; }
.window { display: flex; margin-left: auto; padding-right: 5px; }
.window button { width: 41px; }

.ribbon { display: flex; align-items: flex-start; height: 87px; padding-left: 2px; flex: none; }
.group { display: flex; height: 84px; padding: 0 1px; border-right: 1px solid #c4c4c4; }
.group:nth-child(6) { border-right: 0; }
.cmd { width: 52px; flex-direction: column; justify-content: flex-start; padding-top: 7px; font-size: 14px; line-height: 19px; }
.cmd span { margin-top: 1px; }
.cmd:disabled { color: #b4b4b4; }
.collapse { margin-left: auto; align-self: flex-end; padding: 0 5px 4px 0; }

.stage {
  flex: 1;
  display: flex;
  flex-direction: column;
  background:
    linear-gradient(180deg, rgba(216, 220, 232, 0) 50%, #d8dce8 95%),
    linear-gradient(100deg, #f9fafc 28%, #e4e8f0 54%, #d9dde7 74%, #c9cdd9 100%);
}
.tabrow { display: flex; height: 29px; flex: none; }
.tabs { display: flex; }
.tabs button { box-sizing: border-box; height: 29px; padding: 0 12px 0 11px; gap: 4px; border: 1px solid #808080; border-right: 0; background: #d0d0d0; font-size: 16px; line-height: 27px; color: #222; white-space: nowrap; }
.tabs .latin { font-family: Roboto, sans-serif; font-size: 15px; }
.tabs button:last-child { border-right: 1px solid #808080; }
.tabs button.active { background: #f7f7f7; border: 0; border-bottom: 1px solid #808080; padding: 0 9px; }
.mdi { flex: 1; display: flex; justify-content: flex-end; align-items: center; border-top: 1px solid #808080; padding: 2px 27px 0 0; gap: 8px; }

.body { flex: 1; display: flex; }
.panel { position: relative; width: 273px; box-sizing: border-box; background: #f7f7f7; border-right: 1px solid #888; border-bottom: 1px solid #bbb; flex: none; }
.grip { height: 19px; margin: 4px 2px 0 0; border-top: 1px solid #c2c2c2; border-bottom: 1px solid #c2c2c2; display: flex; align-items: center; justify-content: center; }
.sidetabs { display: flex; height: 25px; margin: 4px 2px 0 2px; border-bottom: 1px solid #aaa; }
.sidetabs button { width: 40px; box-sizing: border-box; border: 1px solid #808080; border-width: 1px 1px 0 0; background: #d0d0d0; }
.sidetabs button.active { background: #f7f7f7; }
.sidetabs .more { background: none; border: 0; margin-left: auto; width: 20px; }
.filter { display: flex; align-items: center; height: 30px; margin: 0 5px; border: 1px solid #c4c4c4; padding-left: 1px; }
.tree { list-style: none; margin: 0; padding: 0; font-size: 15px; }
.tree li { display: flex; height: 24px; align-items: center; }
.twist { display: flex; justify-content: center; width: 13px; }
.tree .tri-down { border-width: 4px 4px 0; border-top-color: #555; }
.node { height: 24px; box-sizing: border-box; padding: 0 4px 0 2px; border: 1px solid transparent; gap: 5px; line-height: 22px; }
.node.selected { background: #a6c8e4; border-color: #3f87b8; }
.lv0 .twist { width: 0; }
.lv0 .node { margin-left: 1px; padding-left: 2px; }
.lv1 .twist { margin: 0 6px 0 5px; }
.lv2 .twist { margin: 0 6px 0 28px; }
.splitter { position: absolute; left: 272px; top: 273px; width: 12px; height: 49px; box-sizing: border-box; background: #f4f4f4; border: 1px solid #999; border-left: 0; z-index: 2; }

.viewport { flex: 1; min-width: 0; display: flex; flex-direction: column; }
.viewbar { height: 29px; padding: 0 4px 2px 0; display: flex; align-items: center; justify-content: center; opacity: .85; }
.viewbar button { width: 26px; }
.viewbar .tri-down { margin: 0 5px 0 3px; opacity: .6; }
.sheet { flex: 1; margin: 1px 0 0 32px; position: relative; border: 1px solid #000; border-width: 1px 0 0 1px; background: #e6e6da; overflow: hidden; }
.drawing { position: absolute; inset: 0; width: 100%; height: 100%; }
.thin { fill: none; stroke: #000; stroke-width: .8; }
.mark { font: 300 18px Lato, sans-serif; }
.caption { font: 500 19px "Noto Sans CJK SC", sans-serif; }
.small { font: 8px "Liberation Mono", monospace; fill: #555; }

.vside { position: relative; width: 16px; display: flex; flex-direction: column; background: #f7f7f7; border-right: 1px solid #222; margin-top: -28px; flex: none; }
.taskpane { position: absolute; right: -2px; top: 58px; width: 34px; box-sizing: border-box; border: 1px solid #808080; border-bottom: 0; background: #d4d4d4; }
.taskpane button { width: 100%; height: 30px; box-sizing: border-box; border-bottom: 1px solid #808080; }
.taskpane .active { background: #fafafa; }
.vscroll { flex: 1; margin-top: 299px; background: #f0f0f0; display: flex; flex-direction: column; align-items: center; }
.vscroll button { height: 20px; width: 100%; }
.vthumb { flex: 283; width: 100%; background: #cdcdcd; margin-bottom: 30px; }

.sheetbar { display: flex; height: 20px; box-sizing: border-box; border-top: 1px solid #777; flex: none; }
.pager { display: flex; width: 79px; background: #a5a8bf; }
.pager button { flex: 1; box-sizing: border-box; border: 1px solid #8e91a8; }
.sheettab { width: 86px; font-size: 16px; line-height: 18px; }
.addtab { width: 42px; padding: 0 6px 2px 0; background: #d0d0d0; border: 1px solid #808080; border-width: 0 1px; box-sizing: border-box; }
.hscroll { flex: 1; margin: 0 16px 0 393px; display: flex; align-items: center; background: #f0f0f0; border-left: 2px solid #333; border-bottom: 3px solid #000; }
.hscroll button { width: 21px; }
.htrack { flex: 1; align-self: stretch; padding: 1px 0; }
.hthumb { width: 92%; height: 100%; background: #cdcdcd; }

.status { display: flex; align-items: center; height: 22px; border-top: 1px solid #777; font-size: 15px; line-height: 22px; white-space: nowrap; box-sizing: border-box; padding-top: 3px; flex: none; }
.status { font-family: "Noto Sans", "Noto Sans CJK SC", sans-serif; }
.status span { flex: none; }
.product { width: 438px; padding-left: 1px; box-sizing: border-box; }
.posx { width: 109px; }
.posy { width: 88px; }
.posz { width: 39px; }
.state { width: 63px; }
.editing { width: 131px; }
.scale { width: 60px; }
.lamp { display: flex; justify-content: center; width: 22px; margin-left: 15px; border-right: 1px solid #ccc; padding: 2px 0; }
.right { position: relative; display: flex; align-items: center; margin-left: auto; gap: 12px; }
.right .tri-up { margin: 0 14px 0 9px; }
.site { position: absolute; right: 20px; top: -6px; font: 15px/18px "Liberation Serif", serif; color: #e8323c; }
</style>
